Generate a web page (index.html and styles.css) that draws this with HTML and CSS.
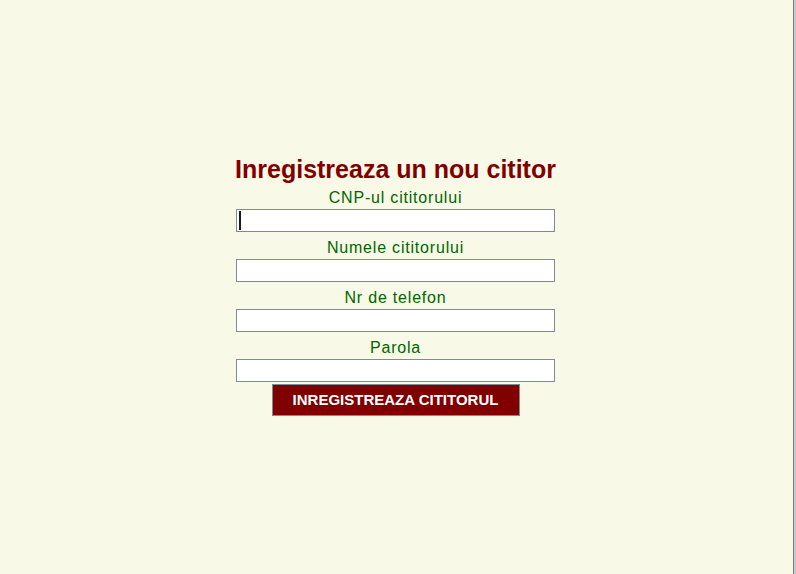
FILE: index.html
```html
<!DOCTYPE html>
<html lang="ro">
<head>
<meta charset="utf-8">
<title>Inregistreaza un nou cititor</title>
<link rel="stylesheet" href="styles.css">
</head>
<body>
<main class="page">
  <form class="reg-form" onsubmit="return false;">
    <h1 class="title">Inregistreaza un nou cititor</h1>
    <label class="field-label" for="cnp">CNP-ul cititorului</label>
    <div class="input-wrap">
      <input class="field" id="cnp" type="text">
      <span class="caret"></span>
    </div>
    <label class="field-label" for="nume">Numele cititorului</label>
    <input class="field" id="nume" type="text">
    <label class="field-label" for="tel">Nr de telefon</label>
    <input class="field" id="tel" type="text">
    <label class="field-label" for="parola">Parola</label>
    <input class="field" id="parola" type="password">
    <button class="submit" type="submit">INREGISTREAZA CITITORUL</button>
  </form>
</main>
<div class="edge"></div>
</body>
</html>
```

FILE: styles.css
```css
html, body {
  margin: 0;
  padding: 0;
  height: 100%;
}

body {
  display: flex;
  background: #f8f9e6;
  font-family: "Liberation Sans", Arial, sans-serif;
  overflow: hidden;
}

.page {
  flex: 1;
  display: flex;
  align-items: center;
  justify-content: center;
  min-height: 100vh;
  padding-right: 2px;
}

.edge {
  width: 3px;
  flex: none;
  border-left: 1px solid #7d7d7d;
  background: #c8c8c8;
  box-sizing: border-box;
}

.reg-form {
  display: flex;
  flex-direction: column;
  align-items: center;
  margin-top: -3px;
}

.title {
  margin: 0;
  font-size: 25px;
  line-height: 26px;
  font-weight: bold;
  color: #800000;
}

.field-label {
  display: block;
  margin: 7px 0 2px;
  font-size: 16px;
  line-height: 18px;
  letter-spacing: 0.8px;
  color: #006600;
}

.input-wrap {
  position: relative;
  display: flex;
}

.field {
  box-sizing: border-box;
  width: 319px;
  height: 23px;
  margin: 0;
  padding: 0 3px;
  border: 1px solid #7f8b97;
  background: #ffffff;
  font-family: "Liberation Sans", Arial, sans-serif;
  font-size: 14px;
  outline: none;
}

.caret {
  position: absolute;
  left: 3px;
  top: 2px;
  width: 2px;
  height: 19px;
  background: #1a1a1a;
}

.submit {
  box-sizing: border-box;
  width: 248px;
  height: 32px;
  margin-top: 2px;
  padding: 0;
  border: 1px solid #7f8b97;
  background: #800000;
  color: #ffffff;
  font-family: "Liberation Sans", Arial, sans-serif;
  font-size: 15px;
  font-weight: bold;
  cursor: pointer;
}
```
